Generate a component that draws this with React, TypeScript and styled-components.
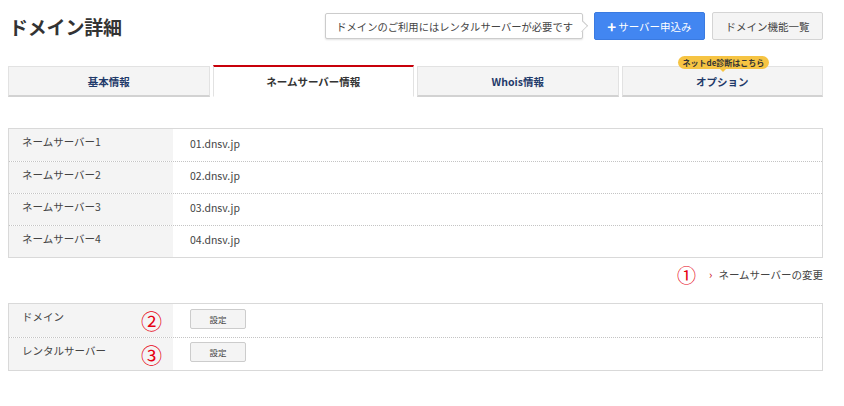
import React from "react";
import styled, { createGlobalStyle } from "styled-components";

const GlobalStyle = createGlobalStyle`
  body {
    margin: 0;
    background: #fff;
    color: #333;
    font-family: "Noto Sans CJK JP", "Noto Sans", sans-serif;
  }
`;

type NsRow = { label: string; value: string };

const nameServers: NsRow[] = [
  { label: "ネームサーバー1", value: "01.dnsv.jp" },
  { label: "ネームサーバー2", value: "02.dnsv.jp" },
  { label: "ネームサーバー3", value: "03.dnsv.jp" },
  { label: "ネームサーバー4", value: "04.dnsv.jp" },
];

const tabs = ["基本情報", "ネームサーバー情報", "Whois情報", "オプション"];

export default function App() {
  const active = 1;

  return (
    <Page>
      <GlobalStyle />
      <Header>
        <Title>ドメイン詳細</Title>
        <Actions>
          <Balloon>ドメインのご利用にはレンタルサーバーが必要です</Balloon>
          <PrimaryButton>
            <Plus>+</Plus>サーバー申込み
          </PrimaryButton>
          <GrayButton>ドメイン機能一覧</GrayButton>
        </Actions>
      </Header>

      <Tabs>
        {tabs.map((t, i) => (
          <Tab key={t} isActive={i === active}>
            {t}
            {i === 3 && <Badge>ネットde診断はこちら</Badge>}
          </Tab>
        ))}
      </Tabs>

      <Table>
        {nameServers.map((row) => (
          <Row key={row.label}>
            <Label>{row.label}</Label>
            <Value>{row.value}</Value>
          </Row>
        ))}
      </Table>

      <LinkRow>
        <Mark>①</Mark>
        <ChangeLink>
          <Chevron>›</Chevron>ネームサーバーの変更
        </ChangeLink>
      </LinkRow>

      <Table2>
        <Row tall>
          <Label>
            ドメイン
            <Mark>②</Mark>
          </Label>
          <Value>
            <SmallButton>設定</SmallButton>
          </Value>
        </Row>
        <Row tall>
          <Label>
            レンタルサーバー
            <Mark>③</Mark>
          </Label>
          <Value>
            <SmallButton>設定</SmallButton>
          </Value>
        </Row>
      </Table2>
    </Page>
  );
}

const Page = styled.div`
  width: 815px;
  padding: 12px 0 0 8px;
`;

const Header = styled.div`
  display: flex;
  align-items: center;
  justify-content: space-between;
  height: 28px;
`;

const Title = styled.h1`
  margin: 0 0 0 1px;
  font-size: 19px;
  font-weight: bold;
  color: #333;
  letter-spacing: -0.2px;
`;

const Actions = styled.div`
  display: flex;
  align-items: center;
  gap: 7px;
`;

const Balloon = styled.div`
  position: relative;
  height: 26px;
  box-sizing: border-box;
  display: flex;
  align-items: center;
  padding: 0 9px 0 10px;
  margin-right: 4px;
  border: 1px solid #ccc;
  border-radius: 2px;
  background: #fff;
  box-shadow: 0 1px 2px rgba(0, 0, 0, 0.12);
  font-size: 10.3px;
  color: #444;

  &::after {
    content: "";
    position: absolute;
    right: -5px;
    top: 8px;
    width: 8px;
    height: 8px;
    background: #fff;
    border-top: 1px solid #ccc;
    border-right: 1px solid #ccc;
    transform: rotate(45deg) scale(0.75, 1);
  }
`;

const PrimaryButton = styled.div`
  width: 111px;
  height: 28px;
  box-sizing: border-box;
  display: flex;
  align-items: center;
  justify-content: center;
  background: #4286f1;
  border: 1px solid #3a7ae0;
  border-radius: 2px;
  color: #fff;
  font-size: 10.5px;
`;

const Plus = styled.span`
  font-size: 15px;
  font-weight: bold;
  margin-right: 2px;
  line-height: 1;
`;

const GrayButton = styled.div`
  width: 111px;
  height: 28px;
  box-sizing: border-box;
  display: flex;
  align-items: center;
  justify-content: center;
  background: #f4f4f4;
  border: 1px solid #d4d4d4;
  border-radius: 2px;
  color: #444;
  font-size: 10.5px;
`;

const Tabs = styled.div`
  display: flex;
  gap: 3px;
  margin-top: 26px;
`;

const Tab = styled.div<{ isActive: boolean }>`
  position: relative;
  flex: 1;
  height: 31px;
  box-sizing: border-box;
  display: flex;
  align-items: center;
  justify-content: center;
  font-size: 10.5px;
  font-weight: bold;
  background: ${(p) => (p.isActive ? "#fff" : "#f4f4f4")};
  color: ${(p) => (p.isActive ? "#333" : "#1f3a6a")};
  border: 1px solid #e2e2e2;
  border-top: ${(p) => (p.isActive ? "2px solid #c8000a" : "1px solid #e2e2e2")};
  border-bottom: ${(p) => (p.isActive ? "1px solid #fff" : "2px solid #d2d2d2")};
  ${(p) => (p.isActive ? "margin-top: -1px; height: 32px;" : "")}
`;

const Badge = styled.span`
  position: absolute;
  top: -11px;
  left: 55px;
  height: 13px;
  padding: 0 5px;
  display: flex;
  align-items: center;
  border-radius: 7px;
  background: #f6c443;
  color: #333;
  font-size: 8px;
  font-weight: bold;
  white-space: nowrap;

  &::after {
    content: "";
    position: absolute;
    left: 50%;
    bottom: -3px;
    margin-left: -3px;
    border-left: 3px solid transparent;
    border-right: 3px solid transparent;
    border-top: 3px solid #f6c443;
  }
`;

const Table = styled.div`
  margin-top: 31px;
  border: 1px solid #d9d9d9;
`;

const Table2 = styled(Table)`
  margin-top: 14px;
`;

const Row = styled.div<{ tall?: boolean }>`
  display: grid;
  grid-template-columns: 164px 1fr;
  box-sizing: border-box;
  height: ${(p) => (p.tall ? "33px" : "32px")};
  & + & {
    border-top: 1px dotted #c4c4c4;
  }
`;

const Label = styled.div`
  display: flex;
  align-items: flex-start;
  justify-content: space-between;
  padding: 5px 11px 0 13px;
  background: #f4f4f4;
  font-size: 10.5px;
  color: #444;

  & > span {
    align-self: center;
    margin-top: -5px;
    margin-right: 0;
    font-size: 21px;
  }
`;

const Value = styled.div`
  display: flex;
  align-items: center;
  padding: 0 0 4px 17px;
  font-size: 10.5px;
  color: #444;
`;

const LinkRow = styled.div`
  display: flex;
  align-items: center;
  justify-content: flex-end;
  height: 30px;
  margin-top: 1px;
`;

const Mark = styled.span`
  color: #e60012;
  font-size: 19px;
  line-height: 1;
  margin-right: 13px;
`;

const ChangeLink = styled.span`
  display: flex;
  align-items: center;
  font-size: 10.5px;
  color: #444;
`;

const Chevron = styled.span`
  color: #c8000a;
  font-size: 11px;
  margin-right: 6px;
`;

const SmallButton = styled.div`
  width: 56px;
  height: 20px;
  box-sizing: border-box;
  display: flex;
  align-items: center;
  justify-content: center;
  background: #f4f4f4;
  border: 1px solid #ccc;
  border-radius: 2px;
  font-size: 8.5px;
  color: #444;
`;
